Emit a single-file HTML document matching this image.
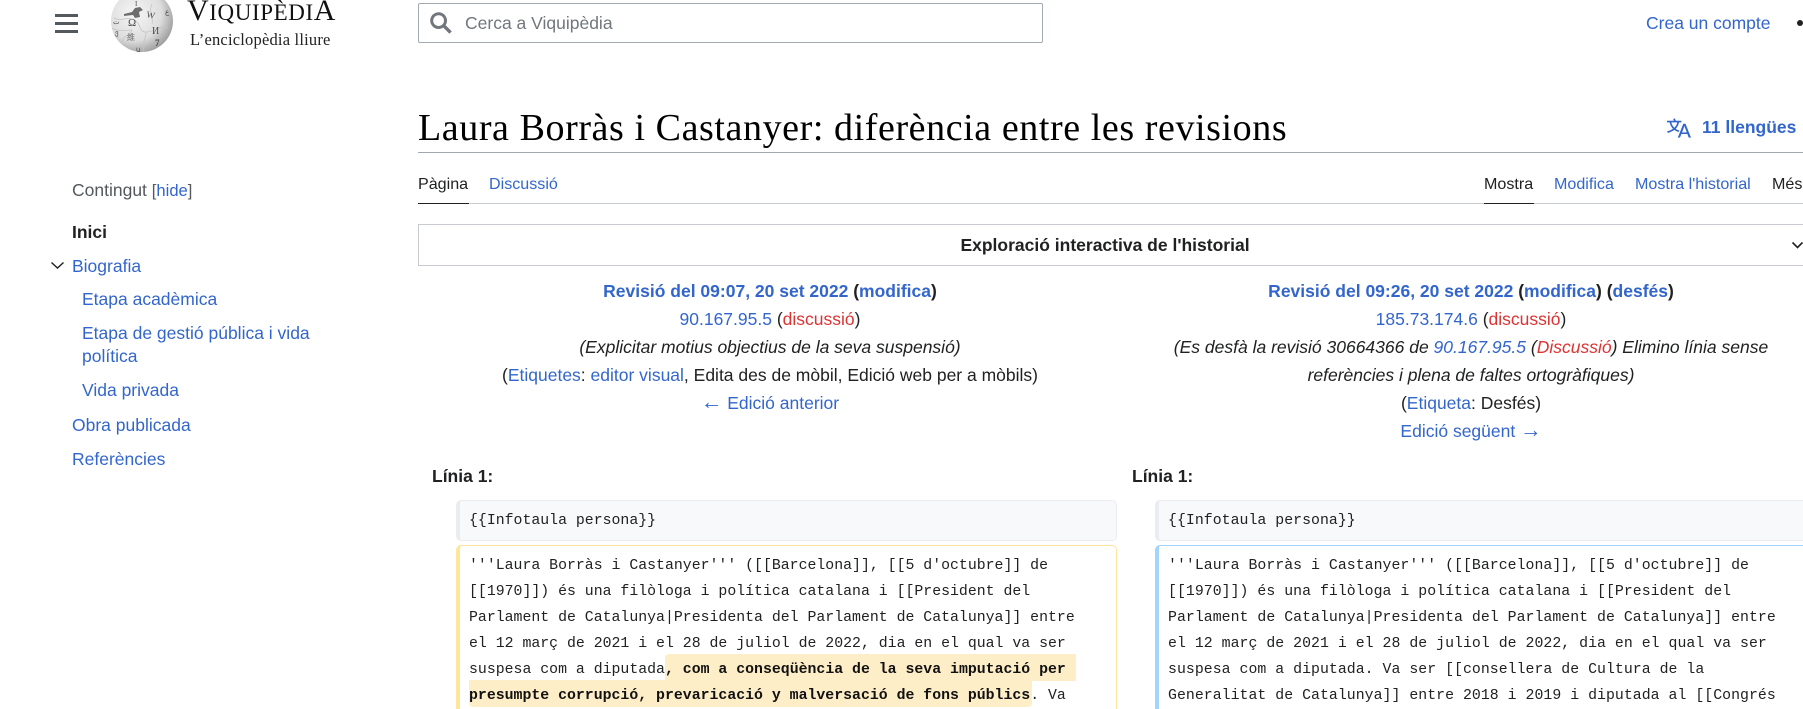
<!DOCTYPE html>
<html lang="ca">
<head>
<meta charset="utf-8">
<title>Laura Borràs i Castanyer: diferència entre les revisions</title>
<style>
html,body{margin:0;padding:0;background:#fff;width:1803px;height:709px;overflow:hidden}
#page{position:relative;width:1803px;height:709px;overflow:hidden;font-family:"Liberation Sans",Arial,sans-serif;font-size:17.5px;color:#202122}
a{color:#36c;text-decoration:none}
a.r{color:#d33}
.t{position:absolute;white-space:nowrap;line-height:20px}
.tab{font-size:16.1px}
.c{position:absolute;white-space:nowrap;line-height:20px;transform:translateX(-50%)}
.b{font-weight:bold}
.ar{font-size:21.5px;line-height:0}
.m{position:absolute;white-space:pre;font-family:"Liberation Mono",monospace;font-size:14.85px;line-height:26px;color:#202122}
.m b{font-weight:bold;color:#111}
.box{position:absolute;box-sizing:border-box;border:1px solid #eaecf0;border-left-width:4px;border-radius:5px}
.hl{position:absolute;background:#feeec8}
.abs{position:absolute}
</style>
</head>
<body>
<div id="page">
<!-- header -->
<div class="abs" style="left:55px;top:14px;width:23px;height:2.6px;background:#54595d"></div>
<div class="abs" style="left:55px;top:22px;width:23px;height:2.6px;background:#54595d"></div>
<div class="abs" style="left:55px;top:30px;width:23px;height:2.6px;background:#54595d"></div>

<svg class="abs" style="left:108px;top:0" width="70" height="56" viewBox="0 0 70 56">
<defs><radialGradient id="g" cx="38%" cy="38%" r="72%"><stop offset="0" stop-color="#f6f6f6"/><stop offset=".6" stop-color="#dedede"/><stop offset="1" stop-color="#8f8f8f"/></radialGradient></defs>
<circle cx="34" cy="21" r="31" fill="url(#g)"/>
<path d="M16 14l8-2 3-4 5-1 3 3-4 2 1 5-5 1-2-3-9 1z" fill="#6d6d6d"/>
<g fill="none" stroke="#c4c4c4" stroke-width=".8"><path d="M6 18c8 4 12-2 20 2s4 12 12 12 10-6 22-4M14 42c2-8 8-6 10-12M38 32c0 6-4 10-2 20M44 4c-4 8 2 12 0 20M24 30c-6 0-14 2-20-2"/></g>
<g font-family="'Liberation Serif',serif" fill="#4c4c4c">
<text x="20" y="26" font-size="11">Ω</text>
<text x="38" y="17" font-size="9" transform="rotate(12 38 17)">W</text>
<text x="44" y="34" font-size="10">И</text>
<text x="19" y="40" font-size="8" font-family="'Noto Serif CJK SC',serif">維</text>
<text x="47" y="46" font-size="9" font-weight="bold">7</text>
<text x="5" y="24" font-size="7">ت</text>
<text x="7" y="35" font-size="7">ვ</text>
<text x="57" y="14" font-size="7">ع</text>
<text x="28" y="52" font-size="6">Ա</text>
<text x="27" y="6" font-size="7">I</text>
</g>
</svg>

<div class="t" style="left:187px;top:-7px;line-height:36px;font-family:'Liberation Serif',serif;font-size:23px;color:#111;letter-spacing:.6px"><span style="font-size:30px">V</span>IQUIPÈDI<span style="font-size:30px">A</span></div>
<div class="t" style="left:190px;top:30px;font-family:'Liberation Serif',serif;font-size:16.5px;color:#222;letter-spacing:.2px">L’enciclopèdia lliure</div>

<div class="abs" style="left:418px;top:3px;width:625px;height:40px;box-sizing:border-box;border:1px solid #a2a9b1;border-radius:2px"></div>
<svg class="abs" style="left:429px;top:11px" width="24" height="24" viewBox="0 0 20 20" fill="#72777d"><path d="M19 17l-5.15-5.15a7 7 0 1 0-2 2L17 19zM3.5 8A4.5 4.5 0 1 1 8 12.5 4.5 4.5 0 0 1 3.5 8z"/></svg>
<div class="t" style="left:465px;top:13px;color:#72777d">Cerca a Viquipèdia</div>
<a class="t" href="#" style="left:1646px;top:13px">Crea un compte</a>
<div class="abs" style="left:1797px;top:20px;width:6px;height:6px;border-radius:50%;background:#202122"></div>

<!-- title -->
<h1 class="t" style="margin:0;left:418px;top:108px;line-height:40px;font-family:'Liberation Serif',serif;font-weight:normal;font-size:38px;color:#000;letter-spacing:.58px">Laura Borràs i Castanyer: diferència entre les revisions</h1>
<svg class="abs" style="left:1667px;top:116px" width="24" height="24" viewBox="0 0 20 20" fill="#36c"><path d="M20 18h-1.44a.61.61 0 0 1-.4-.12.81.81 0 0 1-.23-.31L17 15h-5l-1 2.54a.77.77 0 0 1-.22.3.59.59 0 0 1-.4.14H9l4.55-11.47h1.89zm-3.53-4.31L14.89 9.5a11.62 11.62 0 0 1-.39-1.24q-.09.37-.19.69l-.19.56-1.58 4.19zm-6.3-1.58a13.43 13.43 0 0 1-2.91-1.41 11.46 11.46 0 0 0 2.81-5.37H12V4H7.31a4 4 0 0 0-.2-.56C6.87 2.79 6.6 2 6.6 2l-1.47.5s.4.89.6 1.5H0v1.33h2.15A11.23 11.23 0 0 0 5 10.7a17.19 17.19 0 0 1-5 2.1q.56.82.87 1.38a23.28 23.28 0 0 0 5.22-2.51 15.64 15.64 0 0 0 3.56 1.77zM3.63 5.33h4.91a8.11 8.11 0 0 1-2.45 4.45 9.11 9.11 0 0 1-2.46-4.45z"/></svg>
<a class="t b" href="#" style="left:1702px;top:117px">11 llengües</a>
<div class="abs" style="left:418px;top:152px;width:1385px;height:1px;background:#a2a9b1"></div>

<!-- tabs -->
<a class="t tab" href="#" style="left:418px;top:174px;color:#202122">Pàgina</a>
<a class="t tab" href="#" style="left:489px;top:174px">Discussió</a>
<a class="t tab" href="#" style="left:1484px;top:174px;color:#202122">Mostra</a>
<a class="t tab" href="#" style="left:1554px;top:174px">Modifica</a>
<a class="t tab" href="#" style="left:1635px;top:174px">Mostra l'historial</a>
<div class="t tab" style="left:1772px;top:174px">Més</div>
<div class="abs" style="left:418px;top:203px;width:1385px;height:1px;background:#c8ccd1"></div>
<div class="abs" style="left:418px;top:203px;width:51px;height:1px;background:#202122"></div>
<div class="abs" style="left:1484px;top:203px;width:50px;height:1px;background:#202122"></div>

<!-- history box -->
<div class="abs" style="left:418px;top:224px;width:1400px;height:42px;box-sizing:border-box;border:1px solid #c8ccd1"></div>
<div class="c b" style="left:1105px;top:235px;color:#202122">Exploració interactiva de l'historial</div>
<svg class="abs" style="left:1792px;top:240px" width="11" height="10" viewBox="0 0 11 10"><path d="M0.5 2.5L5.5 7.5L10.5 2.5" fill="none" stroke="#202122" stroke-width="1.6"/></svg>

<!-- sidebar -->
<div class="t" style="left:72px;top:180px;color:#54595d">Contingut <span style="font-size:16.6px">[<a href="#">hide</a>]</span></div>
<a class="t b" href="#" style="left:72px;top:222px;color:#202122">Inici</a>
<svg class="abs" style="left:50px;top:260px" width="15" height="10" viewBox="0 0 15 10"><path d="M1.5 2.5L7.5 8L13.5 2.5" fill="none" stroke="#202122" stroke-width="1.4"/></svg>
<a class="t" href="#" style="left:72px;top:256px">Biografia</a>
<a class="t" href="#" style="left:82px;top:289px">Etapa acadèmica</a>
<a class="t" href="#" style="left:82px;top:323px">Etapa de gestió pública i vida</a>
<a class="t" href="#" style="left:82px;top:346px">política</a>
<a class="t" href="#" style="left:82px;top:380px">Vida privada</a>
<a class="t" href="#" style="left:72px;top:415px">Obra publicada</a>
<a class="t" href="#" style="left:72px;top:449px">Referències</a>

<!-- diff header left -->
<div class="c b" style="left:770px;top:281px"><a href="#">Revisió del 09:07, 20 set 2022</a> (<a href="#">modifica</a>)</div>
<div class="c" style="left:770px;top:309px"><a href="#">90.167.95.5</a> (<a class="r" href="#">discussió</a>)</div>
<div class="c" style="left:770px;top:337px;font-style:italic">(Explicitar motius objectius de la seva suspensió)</div>
<div class="c" style="left:770px;top:365px">(<a href="#">Etiquetes</a>: <a href="#">editor visual</a>, Edita des de mòbil, Edició web per a mòbils)</div>
<a class="c" href="#" style="left:770px;top:393px"><span class="ar">←</span> Edició anterior</a>

<!-- diff header right -->
<div class="c b" style="left:1471px;top:281px"><a href="#">Revisió del 09:26, 20 set 2022</a> (<a href="#">modifica</a>) (<a href="#">desfés</a>)</div>
<div class="c" style="left:1471px;top:309px"><a href="#">185.73.174.6</a> (<a class="r" href="#">discussió</a>)</div>
<div class="c" style="left:1471px;top:337px;font-style:italic">(Es desfà la revisió 30664366 de <a href="#">90.167.95.5</a> (<a class="r" href="#">Discussió</a>) Elimino línia sense</div>
<div class="c" style="left:1471px;top:365px;font-style:italic">referències i plena de faltes ortogràfiques)</div>
<div class="c" style="left:1471px;top:393px">(<a href="#">Etiqueta</a>: Desfés)</div>
<a class="c" href="#" style="left:1471px;top:421px">Edició següent <span class="ar">→</span></a>

<!-- diff lines -->
<div class="t b" style="left:432px;top:466px">Línia 1:</div>
<div class="t b" style="left:1132px;top:466px">Línia 1:</div>

<div class="box" style="left:456px;top:500px;width:661px;height:41px;background:#f8f9fa"></div>
<div class="m" style="left:469px;top:508px">{{Infotaula persona}}</div>
<div class="box" style="left:1155px;top:500px;width:660px;height:41px;background:#f8f9fa"></div>
<div class="m" style="left:1168px;top:508px;letter-spacing:.03px">{{Infotaula persona}}</div>

<div class="box" style="left:456px;top:545px;width:661px;height:175px;border-color:#ffe49c"></div>
<div class="hl" style="left:665px;top:654px;width:411px;height:27px;border-radius:4px 0 0 0"></div>
<div class="hl" style="left:469px;top:680px;width:563px;height:27px;border-radius:0 0 4px 4px"></div>
<div class="m" style="left:469px;top:553px">'''Laura Borràs i Castanyer''' ([[Barcelona]], [[5 d'octubre]] de
[[1970]]) és una filòloga i política catalana i [[President del
Parlament de Catalunya|Presidenta del Parlament de Catalunya]] entre
el 12 març de 2021 i el 28 de juliol de 2022, dia en el qual va ser
suspesa com a diputada<b>, com a conseqüència de la seva imputació per
presumpte corrupció, prevaricació y malversació de fons públics</b>. Va</div>

<div class="box" style="left:1155px;top:545px;width:660px;height:175px;border-color:#a3d3ff"></div>
<div class="m" style="left:1168px;top:553px;letter-spacing:.03px">'''Laura Borràs i Castanyer''' ([[Barcelona]], [[5 d'octubre]] de
[[1970]]) és una filòloga i política catalana i [[President del
Parlament de Catalunya|Presidenta del Parlament de Catalunya]] entre
el 12 març de 2021 i el 28 de juliol de 2022, dia en el qual va ser
suspesa com a diputada. Va ser [[consellera de Cultura de la
Generalitat de Catalunya]] entre 2018 i 2019 i diputada al [[Congrés</div>
</div>
</body>
</html>
